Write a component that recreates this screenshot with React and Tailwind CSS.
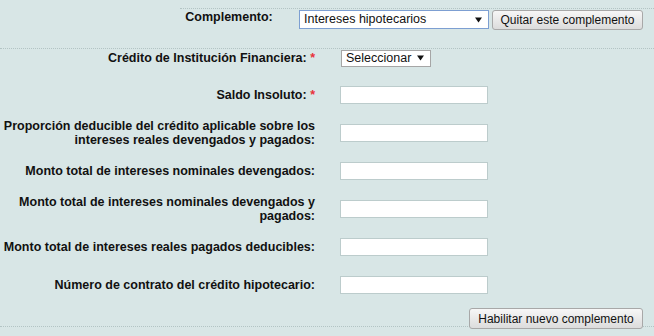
const rows = [
  { label: ['Saldo Insoluto:'], required: true },
  { label: ['Proporción deducible del crédito aplicable sobre los', 'intereses reales devengados y pagados:'] },
  { label: ['Monto total de intereses nominales devengados:'] },
  { label: ['Monto total de intereses nominales devengados y', 'pagados:'] },
  { label: ['Monto total de intereses reales pagados deducibles:'] },
  { label: ['Número de contrato del crédito hipotecario:'] },
];

function Arrow() {
  return (
    <svg width="7" height="6" viewBox="0 0 7 6" className="shrink-0">
      <path d="M0 0.5h7L3.5 5.5z" fill="#111" />
    </svg>
  );
}

function Button({ children, className = '' }) {
  return (
    <button
      className={`h-[20px] px-[6px] text-[12px] leading-none whitespace-nowrap text-[#111] border border-[#a8a8a8] rounded-[3px] bg-gradient-to-b from-[#f7f7f7] to-[#dcdcdc] ${className}`}
    >
      {children}
    </button>
  );
}

export default function App() {
  return (
    <div className="w-[654px] h-[336px] overflow-hidden bg-[#d8e6e6] text-[#111] text-[12.5px] font-['Liberation_Sans',Arial,sans-serif]">
      <div className="pt-[8px]">
        <div className="ml-[180px] h-[40px] border-t border-dotted border-[#b3c4c4] flex items-start pt-[1px]">
          <div className="w-[98px] text-center font-bold leading-[14px]">Complemento:</div>
          <div className="ml-[21px] w-[190px] h-[19px] bg-white border border-[#7d9fd2] flex items-center justify-between pl-[4px] pr-[6px]">
            <span>Intereses hipotecarios</span>
            <Arrow />
          </div>
          <Button className="ml-[3px] w-[151px]">Quitar este complemento</Button>
        </div>
      </div>

      <div className="border-t border-dotted border-[#b3c4c4]">
        <div className="flex items-center h-[18px]">
          <div className="w-[316px] pr-[1px] text-right font-bold leading-[14px] whitespace-nowrap">
            Crédito de Institución Financiera: <span className="text-[#e8303a]">*</span>
          </div>
          <div className="ml-[25px] w-[90px] h-[17px] bg-white border border-[#a6a6a6] flex items-center justify-between pl-[4px] pr-[6px]">
            <span>Seleccionar</span>
            <Arrow />
          </div>
        </div>

        <div className="mt-[9px]">
          {rows.map((r, i) => (
            <div key={i} className="flex items-center h-[38px]">
              <div className="w-[316px] pr-[1px] text-right font-bold leading-[14px] whitespace-nowrap">
                {r.label.map((l, j) => (
                  <div key={j}>
                    {l}
                    {r.required && j === r.label.length - 1 && (
                      <span className="text-[#e8303a]"> *</span>
                    )}
                  </div>
                ))}
              </div>
              <input className="ml-[24px] w-[148px] h-[18px] bg-white border border-[#bccccc] outline-none" />
            </div>
          ))}
        </div>

        <div className="h-[23px] border-b border-dotted border-[#b3c4c4] flex justify-end items-start pr-[11px]">
          <Button className="mt-[4px] w-[174px] h-[21px] relative">Habilitar nuevo complemento</Button>
        </div>
      </div>
    </div>
  );
}
